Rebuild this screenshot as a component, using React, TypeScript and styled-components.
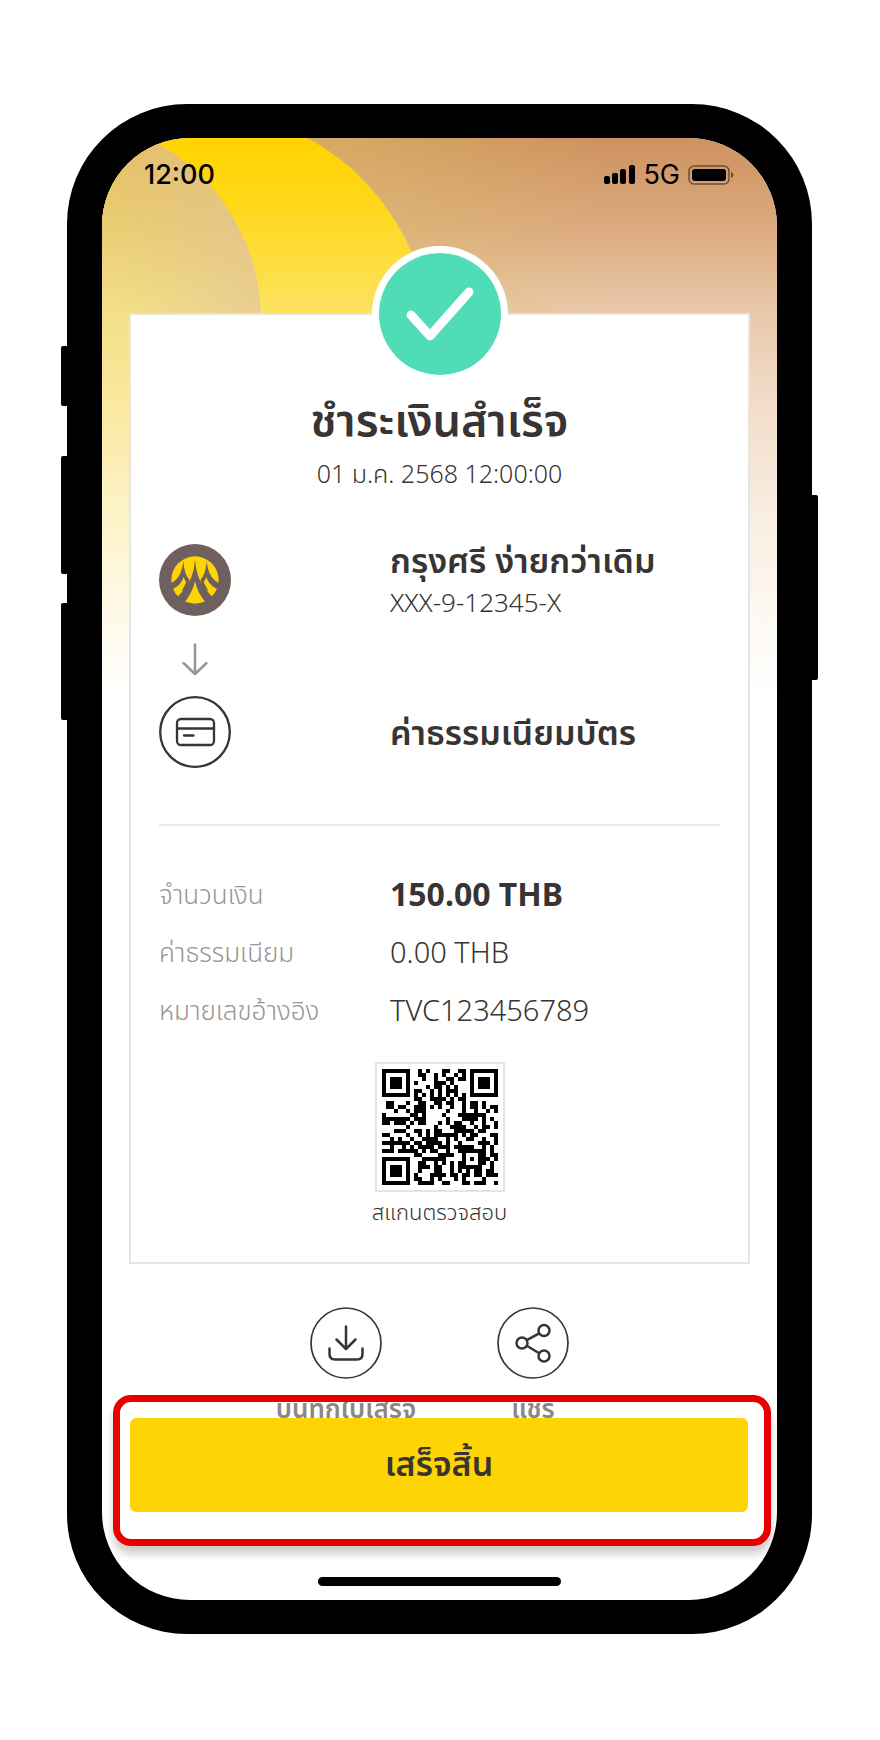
import React from "react";
import styled, { createGlobalStyle } from "styled-components";

const GlobalStyle = createGlobalStyle`
  *, *::before, *::after { box-sizing: border-box; }
  body { margin: 0; background: #fff; color: #383433; font-family: "Noto Sans", "Noto Sans Thai", "Open Sans", sans-serif; }
  h1, h2, p, dl, dd, dt { margin: 0; }
`;

/* ---------- QR code (version 3, level Q, byte mode, mask 1) ---------- */

const QR_SIZE = 29;
const QR_MASK = 1;

function gfMultiply(a: number, b: number): number {
  let product = 0;
  for (let bit = 7; bit >= 0; bit--) {
    product = (product << 1) ^ ((product >>> 7) * 0x11d);
    product ^= ((b >>> bit) & 1) * a;
  }
  return product & 0xff;
}

function errorCodewords(data: number[], degree: number): number[] {
  const divisor: number[] = new Array(degree).fill(0);
  divisor[degree - 1] = 1;
  let root = 1;
  for (let i = 0; i < degree; i++) {
    for (let j = 0; j < degree; j++) {
      divisor[j] = gfMultiply(divisor[j], root);
      if (j + 1 < degree) divisor[j] ^= divisor[j + 1];
    }
    root = gfMultiply(root, 2);
  }
  const result: number[] = new Array(degree).fill(0);
  data.forEach((value) => {
    const factor = value ^ (result.shift() as number);
    result.push(0);
    divisor.forEach((coefficient, i) => {
      result[i] ^= gfMultiply(coefficient, factor);
    });
  });
  return result;
}

function encodeQr(text: string): boolean[][] {
  const bits: number[] = [];
  const push = (value: number, length: number) => {
    for (let i = length - 1; i >= 0; i--) bits.push((value >>> i) & 1);
  };
  push(4, 4);
  push(text.length, 8);
  for (const char of text) push(char.charCodeAt(0), 8);
  push(0, 4);
  const data: number[] = [];
  for (let i = 0; i < bits.length; i += 8) data.push(parseInt(bits.slice(i, i + 8).join(""), 2));
  for (let pad = 0xec; data.length < 34; pad ^= 0xec ^ 0x11) data.push(pad);

  const blocks = [data.slice(0, 17), data.slice(17)];
  const checks = blocks.map((block) => errorCodewords(block, 18));
  const stream: number[] = [];
  for (let i = 0; i < 17; i++) blocks.forEach((block) => stream.push(block[i]));
  for (let i = 0; i < 18; i++) checks.forEach((check) => stream.push(check[i]));

  const dark = Array.from({ length: QR_SIZE }, () => new Array<boolean>(QR_SIZE).fill(false));
  const fixed = Array.from({ length: QR_SIZE }, () => new Array<boolean>(QR_SIZE).fill(false));
  const set = (x: number, y: number, value: boolean) => {
    if (x < 0 || y < 0 || x >= QR_SIZE || y >= QR_SIZE) return;
    dark[y][x] = value;
    fixed[y][x] = true;
  };

  // Timing lines, finder squares and the alignment square
  for (let i = 0; i < QR_SIZE; i++) {
    set(6, i, i % 2 === 0);
    set(i, 6, i % 2 === 0);
  }
  [[3, 3], [QR_SIZE - 4, 3], [3, QR_SIZE - 4]].forEach(([cx, cy]) => {
    for (let dy = -4; dy <= 4; dy++)
      for (let dx = -4; dx <= 4; dx++) {
        const ring = Math.max(Math.abs(dx), Math.abs(dy));
        set(cx + dx, cy + dy, ring !== 2 && ring !== 4);
      }
  });
  for (let dy = -2; dy <= 2; dy++)
    for (let dx = -2; dx <= 2; dx++) set(22 + dx, 22 + dy, Math.max(Math.abs(dx), Math.abs(dy)) !== 1);

  // Format information, written twice
  const level = (3 << 3) | QR_MASK;
  let rem = level;
  for (let i = 0; i < 10; i++) rem = (rem << 1) ^ ((rem >>> 9) * 0x537);
  const format = ((level << 10) | rem) ^ 0x5412;
  const bit = (i: number) => ((format >>> i) & 1) === 1;
  for (let i = 0; i <= 5; i++) set(8, i, bit(i));
  set(8, 7, bit(6));
  set(8, 8, bit(7));
  set(7, 8, bit(8));
  for (let i = 9; i < 15; i++) set(14 - i, 8, bit(i));
  for (let i = 0; i < 8; i++) set(QR_SIZE - 1 - i, 8, bit(i));
  for (let i = 8; i < 15; i++) set(8, QR_SIZE - 15 + i, bit(i));
  set(8, QR_SIZE - 8, true);

  // Codewords in two-column zigzag order
  let index = 0;
  for (let right = QR_SIZE - 1; right >= 1; right -= 2) {
    if (right === 6) right = 5;
    for (let step = 0; step < QR_SIZE; step++) {
      for (let j = 0; j < 2; j++) {
        const x = right - j;
        const upward = ((right + 1) & 2) === 0;
        const y = upward ? QR_SIZE - 1 - step : step;
        if (fixed[y][x]) continue;
        const value = index < stream.length * 8 && ((stream[index >>> 3] >>> (7 - (index & 7))) & 1) === 1;
        dark[y][x] = value !== (y % 2 === 0);
        index++;
      }
    }
  }
  return dark;
}

const qrPath = encodeQr("http://en.m.wikipedia.org")
  .map((row, y) => row.map((on, x) => (on ? `M${x} ${y}h1v1h-1z` : "")).join(""))
  .join("");

/* ---------- Device ---------- */

const Page = styled.main`
  padding: 104px 68px 106px 67px;
`;

const Phone = styled.div`
  position: relative;
  border-radius: 120px;
  background: #000;
  padding: 34px 35px;
`;

const SideKey = styled.span<{ $side: "left" | "right"; $top: number; $height: number }>`
  position: absolute;
  ${(p) => p.$side}: -6px;
  top: ${(p) => p.$top}px;
  width: 14px;
  height: ${(p) => p.$height}px;
  border-radius: 2px;
  background: #000;
`;

const Screen = styled.div`
  position: relative;
  display: flex;
  flex-direction: column;
  border-radius: 88px;
  overflow: hidden;
  background: #fff;
  padding: 0 27px 14px;
`;

const Backdrop = styled.svg`
  position: absolute;
  top: 0;
  left: 0;
  width: 100%;
  height: 620px;
`;

const StatusBar = styled.header`
  position: relative;
  display: flex;
  align-items: center;
  justify-content: space-between;
  height: 74px;
  margin-bottom: 101px;
  padding: 0 16px 0 15px;
  color: #000;
  font: 500 27px/40px Inter, sans-serif;
`;

const StatusIcons = styled.div`
  display: flex;
  align-items: center;
  gap: 8px;
  font-weight: 400;
`;

/* ---------- Receipt ---------- */

const Receipt = styled.section`
  position: relative;
  display: flex;
  flex-direction: column;
  align-items: center;
  border: 2px solid #e6e5e5;
  background: #fff;
  padding: 0 28px 33px;
`;

const Badge = styled.svg`
  width: 136px;
  height: 136px;
  margin-top: -69px;
`;

const Title = styled.h1`
  margin-top: 5px;
  font-size: 45px;
  font-weight: 600;
  line-height: 64px;
`;

const Stamp = styled.p`
  margin-top: 4px;
  font-size: 25px;
  font-weight: 300;
  line-height: 36px;
`;

const Columns = styled.div`
  display: grid;
  grid-template-columns: 231px 1fr;
  align-items: center;
  width: 100%;
`;

const Transfer = styled(Columns)`
  grid-template-rows: 72px 80px 72px;
  margin-top: 53px;
  padding-bottom: 56px;
  border-bottom: 2px solid #e9e8e8;
`;

const Round = styled.span`
  display: block;
  width: 72px;
  height: 72px;
  svg { display: block; }
`;

const Down = styled.span`
  display: flex;
  justify-content: center;
  width: 72px;
  padding-top: 6px;
`;

const Party = styled.h2`
  font-size: 34px;
  font-weight: 600;
  line-height: 44px;
`;

const Account = styled.p`
  font-size: 26px;
  font-weight: 300;
  line-height: 40px;
`;

const Details = styled.dl`
  width: 100%;
  padding-top: 39px;
`;

const Detail = styled(Columns)`
  height: 58px;
  font-weight: 300;
  line-height: 40px;
`;

const Label = styled.dt`
  color: #989595;
  font-size: 26px;
`;

const Value = styled.dd<{ $strong?: boolean }>`
  font-size: ${(p) => (p.$strong ? 32 : 29)}px;
  font-weight: ${(p) => (p.$strong ? 700 : 300)};
`;

const QrFrame = styled.figure`
  display: flex;
  flex-direction: column;
  align-items: center;
  margin: 23px 0 0;
`;

const QrCode = styled.svg`
  width: 130px;
  height: 130px;
  padding: 5px;
  border: 2px solid #e6e5e5;
`;

const Caption = styled.figcaption`
  margin-top: 1px;
  font-size: 22px;
  font-weight: 300;
  line-height: 36px;
`;

/* ---------- Actions ---------- */

const Actions = styled.div`
  position: relative;
  display: flex;
  justify-content: center;
  gap: 27px;
  margin-top: 43px;
`;

const Action = styled.button`
  display: flex;
  flex-direction: column;
  align-items: center;
  gap: 11px;
  width: 160px;
  border: 0;
  padding: 0;
  background: none;
  color: #8b8786;
  font-family: inherit;
  font-size: 26px;
  font-weight: 600;
  line-height: 36px;
  white-space: nowrap;
`;

const Highlight = styled.div`
  position: relative;
  margin: -31px -21px 0 -16px;
  border: 7px solid #e60000;
  border-radius: 18px;
  padding: 16px 16px 27px 10px;
  box-shadow: 0 8px 8px rgba(0, 0, 0, 0.2);
`;

const Done = styled.button`
  display: block;
  width: 100%;
  height: 94px;
  border: 0;
  border-radius: 6px;
  background: #ffd404;
  color: #383433;
  font-family: inherit;
  font-size: 34px;
  font-weight: 600;
`;

const HomeBar = styled.span`
  align-self: center;
  width: 243px;
  height: 9px;
  margin-top: 31px;
  border-radius: 5px;
  background: #000;
`;

const BrandLogo = () => (
  <svg width="72" height="72" viewBox="0 0 216 216" aria-hidden="true">
    <circle cx="108" cy="108" r="108" fill="#6f5f5e" />
    <circle cx="108" cy="108" r="71" fill="#ffd404" />
    <g fill="#6f5f5e">
      <path d="M73 50C70 84 58 108 34 118L40 136C60 126 70 112 74 98C77 108 81 112 82 114L68 142L84 132L92 108C80 94 76 80 73 50Z" />
      <path d="M143 50C146 84 158 108 182 118L176 136C156 126 146 112 142 98C139 108 135 112 134 114L148 142L132 132L124 108C136 94 140 80 143 50Z" />
      <path d="M108 46C104 96 90 126 56 158L74 178C90 160 102 138 108 112C114 138 126 160 142 178L160 158C126 126 112 96 108 46Z" />
    </g>
  </svg>
);

const CardIcon = () => (
  <svg width="72" height="72" viewBox="0 0 72 72" fill="none" stroke="#383433" strokeWidth="2.300" aria-hidden="true">
    <circle cx="36" cy="36" r="34.800" />
    <rect x="18" y="23" width="37" height="26" rx="4" />
    <path d="M18 32.500H55M25 39.500H34.500" strokeLinecap="round" />
  </svg>
);

const DownloadIcon = () => (
  <svg width="72" height="72" viewBox="0 0 72 72" fill="none" stroke="#383433" strokeLinecap="round" strokeLinejoin="round" aria-hidden="true">
    <circle cx="36" cy="36" r="35" strokeWidth="1.700" />
    <path d="M36 19.500V41.500M26.500 32.500L36 42L45.500 32.500M19.500 41.500V47Q19.500 52.500 25 52.500H47Q52.500 52.500 52.500 47V41.500" strokeWidth="2.500" />
  </svg>
);

const ShareIcon = () => (
  <svg width="72" height="72" viewBox="0 0 72 72" fill="none" stroke="#383433" aria-hidden="true">
    <circle cx="36" cy="36" r="35" strokeWidth="1.700" />
    <g strokeWidth="2.500">
      <circle cx="25" cy="36" r="5.500" />
      <circle cx="47" cy="23.500" r="5.500" />
      <circle cx="47" cy="49" r="5.500" />
      <path d="M29.800 33.200L42.200 26.300M29.800 38.800L42.200 46.200" />
    </g>
  </svg>
);

const details = [
  { label: "จำนวนเงิน", value: "150.00 THB", strong: true },
  { label: "ค่าธรรมเนียม", value: "0.00 THB" },
  { label: "หมายเลขอ้างอิง", value: "TVC123456789" },
];

export default function App() {
  return (
    <Page>
      <GlobalStyle />
      <Phone>
        <SideKey $side="left" $top={242} $height={60} />
        <SideKey $side="left" $top={352} $height={118} />
        <SideKey $side="left" $top={499} $height={117} />
        <SideKey $side="right" $top={391} $height={185} />
        <Screen>
          <Backdrop viewBox="0 0 675 620" preserveAspectRatio="none" aria-hidden="true">
            <defs>
              <linearGradient id="copper" gradientUnits="userSpaceOnUse" x1="0" y1="0" x2="0" y2="620">
                <stop offset="0" stopColor="#cd925f" />
                <stop offset="0.14" stopColor="#dba97d" />
                <stop offset="0.28" stopColor="#e8c8aa" />
                <stop offset="0.42" stopColor="#f1dcc8" />
                <stop offset="0.65" stopColor="#faf1e6" />
                <stop offset="0.9" stopColor="#fff" />
              </linearGradient>
              <linearGradient id="warm" gradientUnits="userSpaceOnUse" x1="200" y1="0" x2="500" y2="0">
                <stop offset="0" stopColor="#e0c468" stopOpacity="0.5" />
                <stop offset="1" stopColor="#e0c468" stopOpacity="0" />
              </linearGradient>
              <linearGradient id="gold" gradientUnits="userSpaceOnUse" x1="0" y1="0" x2="0" y2="620">
                <stop offset="0" stopColor="#ffd400" />
                <stop offset="0.1" stopColor="#ffd716" />
                <stop offset="0.28" stopColor="#fde260" />
                <stop offset="0.9" stopColor="#fff" />
              </linearGradient>
              <linearGradient id="sand" gradientUnits="userSpaceOnUse" x1="0" y1="0" x2="0" y2="620">
                <stop offset="0" stopColor="#e4be68" />
                <stop offset="0.14" stopColor="#e9cc74" />
                <stop offset="0.28" stopColor="#f3df88" />
                <stop offset="0.42" stopColor="#fae89c" />
                <stop offset="0.65" stopColor="#fdf5d2" />
                <stop offset="0.9" stopColor="#fff" />
              </linearGradient>
              <linearGradient id="blush" gradientUnits="userSpaceOnUse" x1="20" y1="0" x2="170" y2="0">
                <stop offset="0" stopColor="#e2bf98" stopOpacity="0" />
                <stop offset="1" stopColor="#e2bf98" stopOpacity="0.6" />
              </linearGradient>
            </defs>
            <rect width="675" height="620" fill="url(#copper)" />
            <rect width="675" height="176" fill="url(#warm)" />
            <path d="M0 0H205C255 26 290 70 309 113Q322 144 326 180V620H0Z" fill="url(#gold)" />
            <path d="M0 0H45C105 28 158 95 159 180V620H0Z" fill="url(#sand)" />
            <path d="M0 0H45C105 28 158 95 159 180H0Z" fill="url(#blush)" />
          </Backdrop>
          <StatusBar>
            <time>12:00</time>
            <StatusIcons>
              <svg width="31" height="20" viewBox="0 0 31 20" aria-hidden="true">
                <rect x="0" y="11" width="6" height="8" rx="2" />
                <rect x="8" y="8" width="6" height="11" rx="2" />
                <rect x="16" y="4" width="6" height="15" rx="2" />
                <rect x="25" y="0" width="6" height="19" rx="2" />
              </svg>
              <span>5G</span>
              <svg width="46" height="20" viewBox="0 0 46 20" aria-hidden="true">
                <rect x="1" y="1" width="40" height="18" rx="5" fill="none" stroke="#000" strokeOpacity="0.5" strokeWidth="1.500" />
                <rect x="4" y="4" width="34" height="12" rx="3" />
                <path d="M43 7Q45.500 8 45.500 10T43 13Z" fillOpacity="0.5" />
              </svg>
            </StatusIcons>
          </StatusBar>

          <Receipt>
            <Badge viewBox="0 0 136 136" aria-hidden="true">
              <circle cx="68" cy="68" r="68" fill="#fff" />
              <circle cx="68" cy="68" r="61" fill="#4fdcb7" />
              <path d="M39 69L58 90L97 46" fill="none" stroke="#fff" strokeWidth="9" strokeLinecap="round" strokeLinejoin="round" />
            </Badge>
            <Title>ชำระเงินสำเร็จ</Title>
            <Stamp>01 ม.ค. 2568 12:00:00</Stamp>

            <Transfer>
              <Round><BrandLogo /></Round>
              <div>
                <Party>กรุงศรี ง่ายกว่าเดิม</Party>
                <Account>XXX-9-12345-X</Account>
              </div>
              <Down>
                <svg width="26" height="33" viewBox="0 0 26 33" fill="none" stroke="#989595" strokeWidth="2.500" strokeLinecap="round" strokeLinejoin="round" aria-hidden="true">
                  <path d="M13 1.500V31M1.500 20L13 31L24.500 20" />
                </svg>
              </Down>
              <span />
              <Round><CardIcon /></Round>
              <Party>ค่าธรรมเนียมบัตร</Party>
            </Transfer>

            <Details>
              {details.map((d) => (
                <Detail key={d.label}>
                  <Label>{d.label}</Label>
                  <Value $strong={d.strong}>{d.value}</Value>
                </Detail>
              ))}
            </Details>

            <QrFrame>
              <QrCode viewBox={`0 0 ${QR_SIZE} ${QR_SIZE}`} shapeRendering="crispEdges" aria-hidden="true">
                <path d={qrPath} />
              </QrCode>
              <Caption>สแกนตรวจสอบ</Caption>
            </QrFrame>
          </Receipt>

          <Actions>
            <Action type="button">
              <DownloadIcon />
              บันทึกใบเสร็จ
            </Action>
            <Action type="button">
              <ShareIcon />
              แชร์
            </Action>
          </Actions>

          <Highlight>
            <Done type="button">เสร็จสิ้น</Done>
          </Highlight>
          <HomeBar />
        </Screen>
      </Phone>
    </Page>
  );
}
